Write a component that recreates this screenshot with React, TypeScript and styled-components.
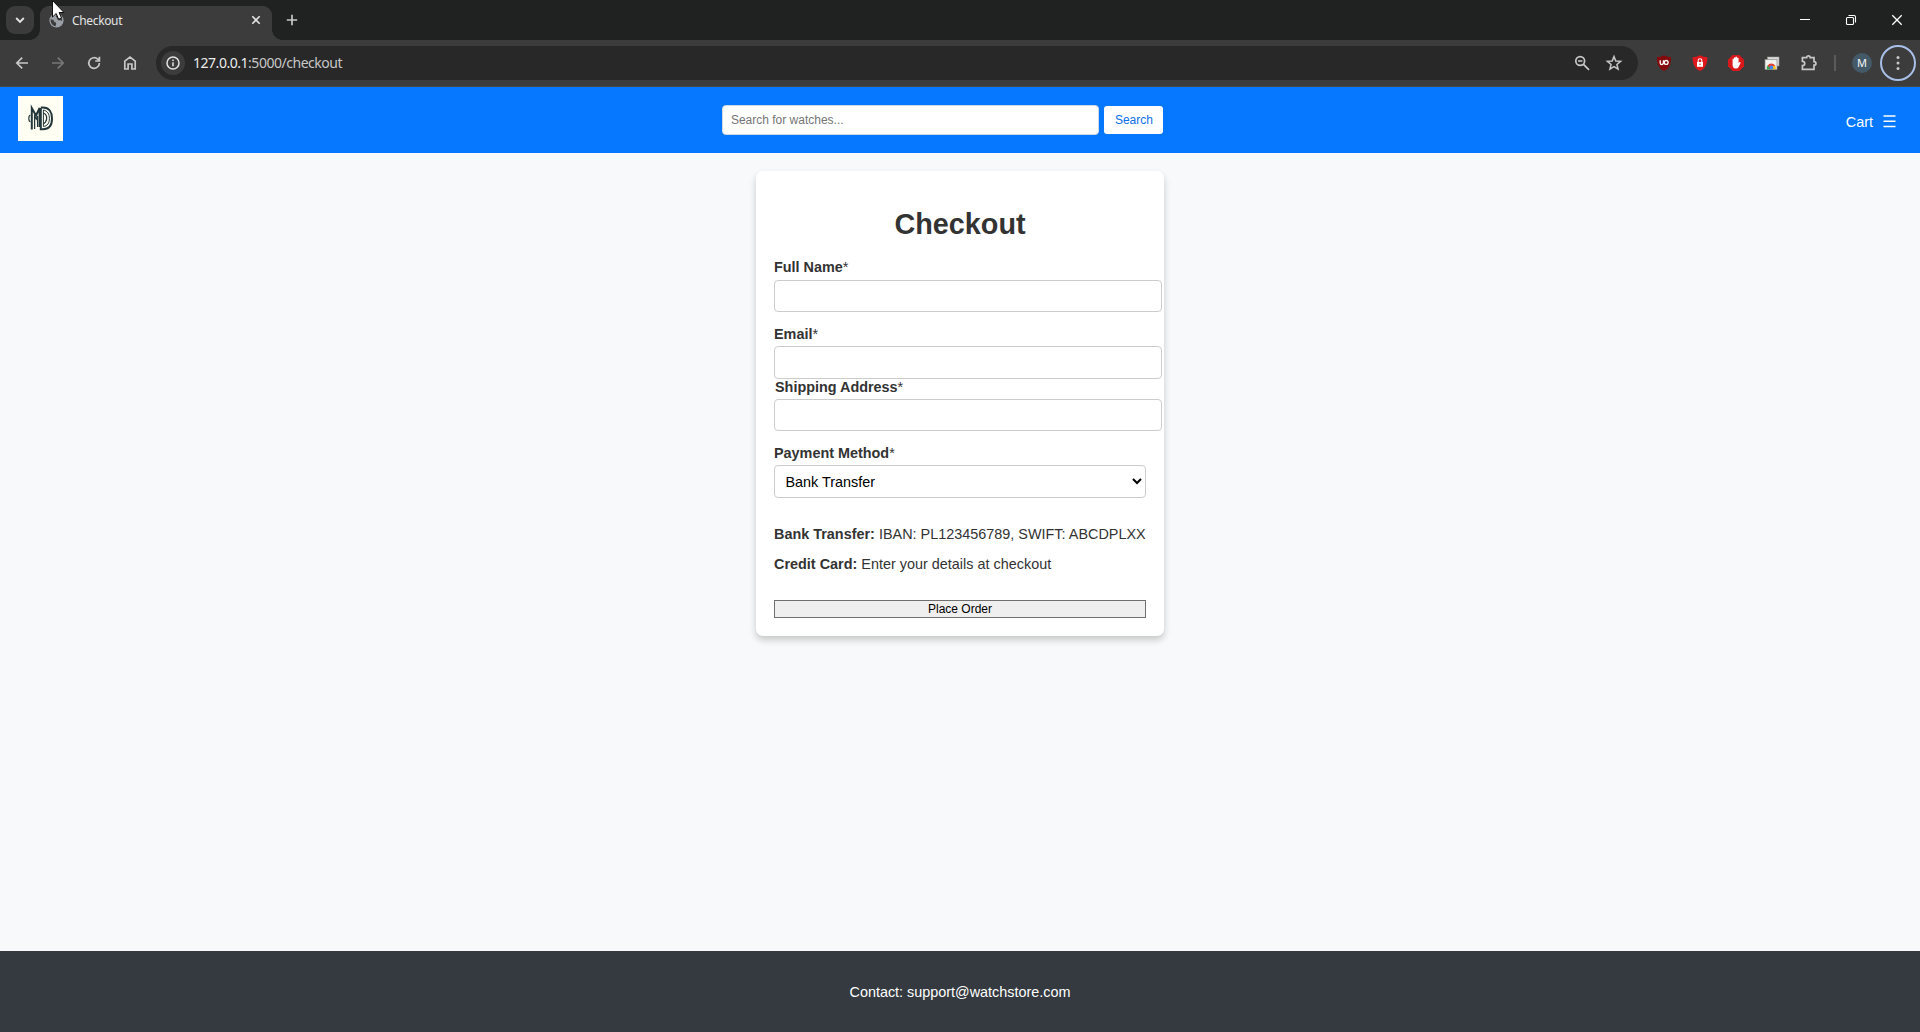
import React from "react";
import styled, { createGlobalStyle } from "styled-components";

const GlobalStyle = createGlobalStyle`
  html, body, #root { height: 100%; }
  body { margin: 0; overflow: hidden; background: #f8f9fa; }
`;

const ui = `"Noto Sans", "Open Sans", sans-serif`;
const arial = `"Liberation Sans", Arial, sans-serif`;

const Window = styled.div`
  width: 1920px;
  height: 1032px;
  display: flex;
  flex-direction: column;
  overflow: hidden;
  position: relative;
`;

const TabStrip = styled.div`
  height: 40px;
  flex: none;
  display: flex;
  align-items: flex-start;
  background: #202221;
`;

const TabSearch = styled.button`
  width: 28px;
  height: 28px;
  margin: 6px 6px 0;
  padding: 0;
  border: 0;
  border-radius: 9px;
  background: #3a3b3a;
  display: grid;
  place-items: center;
`;

const Tab = styled.div`
  position: relative;
  box-sizing: border-box;
  width: 232px;
  height: 34px;
  margin-top: 6px;
  padding: 0 10px 6px 9px;
  display: flex;
  align-items: center;
  border-radius: 9px 9px 0 0;
  background: #3c3c3c;
  &::before, &::after {
    content: "";
    position: absolute;
    bottom: 0;
    width: 10px;
    height: 10px;
  }
  &::before { left: -10px; background: radial-gradient(circle at 0 0, transparent 9.5px, #3c3c3c 10px); }
  &::after { right: -10px; background: radial-gradient(circle at 100% 0, transparent 9.5px, #3c3c3c 10px); }
`;

const TabTitle = styled.span`
  flex: 1;
  margin-left: 8px;
  padding-top: 2px;
  font: 12px/16px ${ui};
  letter-spacing: -0.35px;
  color: #e3e3e3;
`;

const NewTab = styled.div`
  margin: 13px 0 0 13px;
  display: flex;
`;

const WindowControls = styled.div`
  margin-left: auto;
  display: flex;
  svg { display: block; }
`;

const Toolbar = styled.div`
  height: 47px;
  flex: none;
  box-sizing: border-box;
  padding: 0 4px 1px 11px;
  display: flex;
  align-items: center;
  background: #3c3c3c;
  border-bottom: 1px solid #4a4a48;
`;

const NavGroup = styled.div`
  display: flex;
  gap: 14px;
  svg { display: block; }
`;

const AddressBar = styled.div`
  width: 1482px;
  height: 34px;
  margin-left: 15px;
  padding: 0 14px 0 5px;
  box-sizing: border-box;
  display: flex;
  align-items: center;
  border-radius: 17px;
  background: #282828;
`;

const SiteInfo = styled.span`
  width: 24px;
  height: 24px;
  border-radius: 50%;
  background: #3c3c3c;
  display: grid;
  place-items: center;
`;

const Url = styled.span`
  flex: 1;
  margin-left: 8px;
  font: 14px/20px ${ui};
  letter-spacing: -0.47px;
  color: #c7c7c7;
  b { font-weight: 400; color: #ececec; }
`;

const BarIcons = styled.div`
  display: flex;
  gap: 12px;
`;

const Extensions = styled.div`
  margin-left: 16px;
  display: flex;
  gap: 16px;
  svg { display: block; }
`;

const Divider = styled.span`
  width: 2px;
  height: 16px;
  margin: 0 16px 0 16px;
  background: #5b5b5b;
`;

const Avatar = styled.span`
  width: 20px;
  height: 20px;
  border-radius: 50%;
  background: #455a68;
  color: #f4f8fa;
  font: 11px/20px ${ui};
  text-align: center;
`;

const MenuButton = styled.span`
  box-sizing: border-box;
  width: 36px;
  height: 36px;
  margin-left: 8px;
  border: 2px solid #a8bfe8;
  border-radius: 50%;
  display: grid;
  place-items: center;
`;

const Header = styled.header`
  height: 66px;
  flex: none;
  box-sizing: border-box;
  padding: 9px 24px 12px 18px;
  display: flex;
  justify-content: space-between;
  align-items: flex-start;
  background: #0678ff;
  font-family: ${arial};
`;

const Logo = styled.div`
  width: 45px;
  height: 45px;
  background: #fffff4;
  svg { display: block; }
`;

const SearchForm = styled.div`
  display: flex;
  align-items: center;
  gap: 5px;
  margin: 9px 23px 0 0;
`;

const SearchInput = styled.input`
  box-sizing: border-box;
  width: 377px;
  height: 30px;
  padding: 0 7.5px;
  border: 1px solid #cfd9e6;
  border-radius: 4px;
  background: #fff;
  font: 12px ${arial};
  &::placeholder { color: #757575; opacity: 1; }
`;

const SearchButton = styled.button`
  width: 59px;
  height: 28px;
  padding: 0 0 1px;
  border: 0;
  border-radius: 3px;
  background: #fff;
  color: #0b6fe8;
  font: 12px ${arial};
`;

const CartLink = styled.a`
  display: flex;
  align-items: center;
  gap: 10px;
  margin-top: 17px;
  color: #fff;
  font: 14.4px/18px ${arial};
  svg { margin-bottom: 2px; }
`;

const Main = styled.main`
  flex: 1;
  display: flex;
  justify-content: center;
  align-items: flex-start;
  padding-top: 18px;
  background: #f8f9fa;
`;

const Card = styled.section`
  box-sizing: border-box;
  width: 408px;
  height: 465px;
  padding: 35px 18px 0;
  border-radius: 7px;
  background: #fff;
  box-shadow: 0 4px 7px rgba(0, 0, 0, 0.2);
  color: #333;
  font-family: ${arial};
`;

const Title = styled.h1`
  margin: 0 0 16px;
  font-size: 28.8px;
  line-height: 36px;
  text-align: center;
`;

const Field = styled.div<{ $gap: number; $labelGap?: number; $indent?: number }>`
  margin-bottom: ${(p) => p.$gap}px;
  label {
    display: block;
    height: 18px;
    margin-bottom: ${(p) => p.$labelGap ?? 3}px;
    padding-left: ${(p) => p.$indent ?? 0}px;
    font-size: 14.4px;
    line-height: 18px;
  }
`;

const TextInput = styled.input<{ $tall?: boolean }>`
  display: block;
  box-sizing: border-box;
  width: 388px;
  height: ${(p) => (p.$tall ? 33 : 32)}px;
  padding: 0 9px;
  border: 1px solid #ccc;
  border-radius: 4px;
  background: #fff;
  font: 14.4px ${arial};
`;

const MethodSelect = styled.select`
  display: block;
  box-sizing: border-box;
  width: 372px;
  height: 33px;
  padding: 0 6.5px;
  border: 1px solid #ccc;
  border-radius: 4px;
  background: #fff;
  color: #000;
  font: 14.4px ${arial};
`;

const Details = styled.p`
  margin: 0 0 12px;
  font-size: 14.4px;
  line-height: 18px;
  letter-spacing: 0.01px;
  white-space: nowrap;
`;

const Submit = styled.button`
  display: block;
  width: 372px;
  height: 18px;
  margin-top: 27px;
  padding: 0;
  border: 1px solid #6f6f6f;
  border-radius: 0;
  background: #efefef;
  color: #000;
  font: 12px/15px ${arial};
`;

const Footer = styled.footer`
  height: 81px;
  flex: none;
  display: grid;
  place-items: center;
  background: #343a40;
  color: #fff;
  font: 14.4px ${arial};
`;

const Pointer = styled.svg`
  position: absolute;
  left: 51px;
  top: 0;
`;

const line = { fill: "none", stroke: "#c7c7c7", strokeWidth: 1.7 } as const;

const LogoMark = () => (
  <svg width="45" height="45" viewBox="0 0 45 45" fill="none" stroke="#24373a">
    <path d="M13.8 33.5V12L18 19.5L21.6 12V31" strokeWidth="2" />
    <path d="M16.6 33V20L18.3 23L19.6 20V31" strokeWidth="1.3" />
    <path d="M22.8 11.5H25C31 11.5 34 16 34 22.5S31 33.2 25 33.2H22.8V12" strokeWidth="2" />
    <path d="M25.4 14V30.5C29.5 30 31.4 27 31.4 22.5S29.5 15 25.4 14Z" strokeWidth="1" />
    <path d="M25.4 17C28 18 28.9 20.5 28.6 23C28.3 25.5 27.3 27 25.4 27.7" strokeWidth="1.3" />
    <path d="M12.4 19.2C10.3 19.6 10.3 25.3 12.4 25.7" strokeWidth="1.2" />
  </svg>
);

export default function App() {
  return (
    <Window>
      <GlobalStyle />
      <TabStrip>
        <TabSearch aria-label="Search tabs">
          <svg width="10" height="10" viewBox="0 0 10 10" fill="none" stroke="#e3e3e3" strokeWidth="1.9"><path d="M1.2 3L5 6.8L8.8 3" /></svg>
        </TabSearch>
        <Tab>
          <svg width="15" height="15" viewBox="0 0 15 15">
            <circle cx="7.5" cy="7.5" r="7.1" fill="#9aa0a6" />
            <path d="M1.7 6.2C4 6.4 4.8 7 5 8.3C5.3 9.6 7 8.8 7.2 10.5C7.3 11.6 6.5 12 6.8 13.2C3.8 13 1.2 10 1.7 6.2ZM8.2 1.7C7 3 6.5 3.5 7.7 4.6C8.8 5.6 8 6.6 9.2 7.2C10.5 7.7 11 6.3 13.2 8C13.3 5 11.3 2 8.2 1.7Z" fill="#3c3c3c" />
          </svg>
          <TabTitle>Checkout</TabTitle>
          <svg width="12" height="12" viewBox="0 0 12 12" fill="none" stroke="#e3e3e3" strokeWidth="1.6"><path d="M2.3 2.3L9.7 9.7M9.7 2.3L2.3 9.7" /></svg>
        </Tab>
        <NewTab>
          <svg width="14" height="14" viewBox="0 0 14 14" fill="none" stroke="#c7c7c7" strokeWidth="1.7"><path d="M7 1.8V12.2M1.8 7H12.2" /></svg>
        </NewTab>
        <WindowControls>
          <svg width="46" height="40" viewBox="0 0 46 40"><path d="M18 19.5H28" stroke="#fff" /></svg>
          <svg width="46" height="40" viewBox="0 0 46 40" fill="none" stroke="#fff" strokeWidth="1.1">
            <rect x="18.5" y="17.5" width="7" height="7" rx="1" /><path d="M20.5 15.5H26A1.5 1.5 0 0 1 27.5 17V22.5" />
          </svg>
          <svg width="46" height="40" viewBox="0 0 46 40" fill="none" stroke="#fff" strokeWidth="1.3"><path d="M18.3 15.3L27.7 24.7M27.7 15.3L18.3 24.7" /></svg>
        </WindowControls>
      </TabStrip>

      <Toolbar>
        <NavGroup>
          <svg width="22" height="22" viewBox="0 0 22 22" {...line}><path d="M17 11H6M11.2 5.6L5.8 11L11.2 16.4" /></svg>
          <svg width="22" height="22" viewBox="0 0 22 22" {...line} stroke="#777"><path d="M5 11H16M10.8 5.6L16.2 11L10.8 16.4" /></svg>
          <svg width="22" height="22" viewBox="0 0 22 22" {...line}><path d="M16.4 11A5.3 5.3 0 1 1 14.8 7.2L16.2 8.7M16.4 4.8V9H12.2" /></svg>
          <svg width="22" height="22" viewBox="0 0 22 22" {...line}><path d="M5.8 17V9.1L11 5L16.2 9.1V17H12.9V12H9.1V17Z" /></svg>
        </NavGroup>
        <AddressBar>
          <SiteInfo>
            <svg width="16" height="16" viewBox="0 0 16 16" fill="none" stroke="#e3e3e3" strokeWidth="1.5"><circle cx="8" cy="8" r="6" /><path d="M8 7.2V11.2M8 4.6V6.1" /></svg>
          </SiteInfo>
          <Url><b>127.0.0.1</b>:5000/checkout</Url>
          <BarIcons>
            <svg width="20" height="20" viewBox="0 0 20 20" {...line}><circle cx="8.2" cy="8" r="4.4" /><path d="M11.5 11.3L17 16.8M6 8H10.4" /></svg>
            <svg width="20" height="20" viewBox="0 0 20 20" {...line} strokeWidth={1.5}><path d="M10 3.6L11.8 8L16.6 8.3L12.9 11.4L14.1 16.1L10 13.6L5.9 16.1L7.1 11.4L3.4 8.3L8.2 8Z" /></svg>
          </BarIcons>
        </AddressBar>
        <Extensions>
          <svg width="20" height="20" viewBox="0 0 20 20">
            <path d="M10 2.2C12.2 3.5 14.5 4 17 4C17 11.5 15.5 15.2 10 18C4.5 15.2 3 11.5 3 4C5.5 4 7.8 3.5 10 2.2Z" fill="#850a0c" />
            <path d="M6.2 7.3V9.9A1.6 1.6 0 0 0 9.4 9.9V7.3" fill="none" stroke="#fff" strokeWidth="1.3" /><circle cx="12.2" cy="9.4" r="1.9" fill="none" stroke="#fff" strokeWidth="1.3" />
          </svg>
          <svg width="20" height="20" viewBox="0 0 20 20">
            <path d="M10 2.2C12.2 3.5 14.5 4 17.3 4C17.3 11.5 15.5 15.2 10 18C4.5 15.2 2.7 11.5 2.7 4C5.5 4 7.8 3.5 10 2.2Z" fill="#df181d" />
            <rect x="7" y="9" width="6" height="4.8" fill="#fff" /><path d="M8.2 9V7.5A1.8 1.8 0 0 1 11.8 7.5V9" fill="none" stroke="#fff" strokeWidth="1.1" /><circle cx="10" cy="11.2" r=".7" fill="#df181d" />
          </svg>
          <svg width="20" height="20" viewBox="0 0 20 20">
            <path d="M6.7 2H13.3L18 6.7V13.3L13.3 18H6.7L2 13.3V6.7Z" fill="#d9181b" />
            <path d="M6.6 10V6Q7.3 5.2 8 6V4.7Q8.7 3.9 9.5 4.7V4Q10.3 3.2 11.1 4V4.9Q11.9 4.3 12.6 5.1V10L13.7 8.9Q15.1 8.9 14.4 10.2L12.5 14.2Q11.6 15.7 9.6 15.6Q6.6 15.3 6.6 12Z" fill="#fff" />
          </svg>
          <svg width="20" height="20" viewBox="0 0 20 20">
            <rect x="5.5" y="4" width="11.5" height="9" fill="#ddd" stroke="#999" strokeWidth=".6" /><rect x="3" y="6.5" width="12" height="10" fill="#f1f1ee" stroke="#888" strokeWidth=".7" />
            <path d="M5 16.3A4.2 4.2 0 0 1 6.2 11.8L9.4 16.3Z" fill="#2da94f" /><path d="M5.6 12.4A4.6 4.6 0 0 1 13.4 13H9.3L7.5 15Z" fill="#e3402f" /><path d="M9.3 13H13.4A4.2 4.2 0 0 1 13.6 16.3H9.4Z" fill="#fbc116" /><circle cx="9.4" cy="14.5" r="1.9" fill="#4285f4" />
          </svg>
          <svg width="20" height="20" viewBox="0 0 20 20" {...line}>
            <path d="M4.4 4.7H8.6C8.6 2.2 12.2 2.2 12.2 4.7H16V8.6C18.6 8.6 18.6 12.2 16 12.2V16.3H4.4V12.6C7.5 12.4 7.5 8.5 4.4 8.4Z" />
          </svg>
        </Extensions>
        <Divider />
        <Avatar>M</Avatar>
        <MenuButton>
          <svg width="4" height="16" viewBox="0 0 4 16" fill="#c7c7c7"><circle cx="2" cy="2.6" r="1.5" /><circle cx="2" cy="8" r="1.5" /><circle cx="2" cy="13.4" r="1.5" /></svg>
        </MenuButton>
      </Toolbar>

      <Header>
        <Logo><LogoMark /></Logo>
        <SearchForm>
          <SearchInput placeholder="Search for watches..." />
          <SearchButton>Search</SearchButton>
        </SearchForm>
        <CartLink>
          <span>Cart</span>
          <svg width="13" height="13" viewBox="0 0 13 13" stroke="#fff" strokeWidth="1.4"><path d="M.5 1H12.5M.5 6.2H12.5M.5 11.5H12.5" /></svg>
        </CartLink>
      </Header>

      <Main>
        <Card>
          <Title>Checkout</Title>
          <Field $gap={13} $labelGap={4}><label><b>Full Name</b>*</label><TextInput /></Field>
          <Field $gap={-1}><label><b>Email</b>*</label><TextInput $tall /></Field>
          <Field $gap={13} $indent={1}><label><b>Shipping Address</b>*</label><TextInput /></Field>
          <Field $gap={27}><label><b>Payment Method</b>*</label>
            <MethodSelect defaultValue="bank"><option value="bank">Bank Transfer</option><option value="card">Credit Card</option></MethodSelect>
          </Field>
          <Details><b>Bank Transfer:</b> IBAN: PL123456789, SWIFT: ABCDPLXX</Details>
          <Details><b>Credit Card:</b> Enter your details at checkout</Details>
          <Submit>Place Order</Submit>
        </Card>
      </Main>

      <Footer>Contact: support@watchstore.com</Footer>

      <Pointer width="16" height="22" viewBox="0 0 16 22">
        <path d="M1.5 .5V17L5.2 13.5L7.6 19.2L10.5 18L8.1 12.5H13Z" fill="#fff" stroke="#111" />
      </Pointer>
    </Window>
  );
}
